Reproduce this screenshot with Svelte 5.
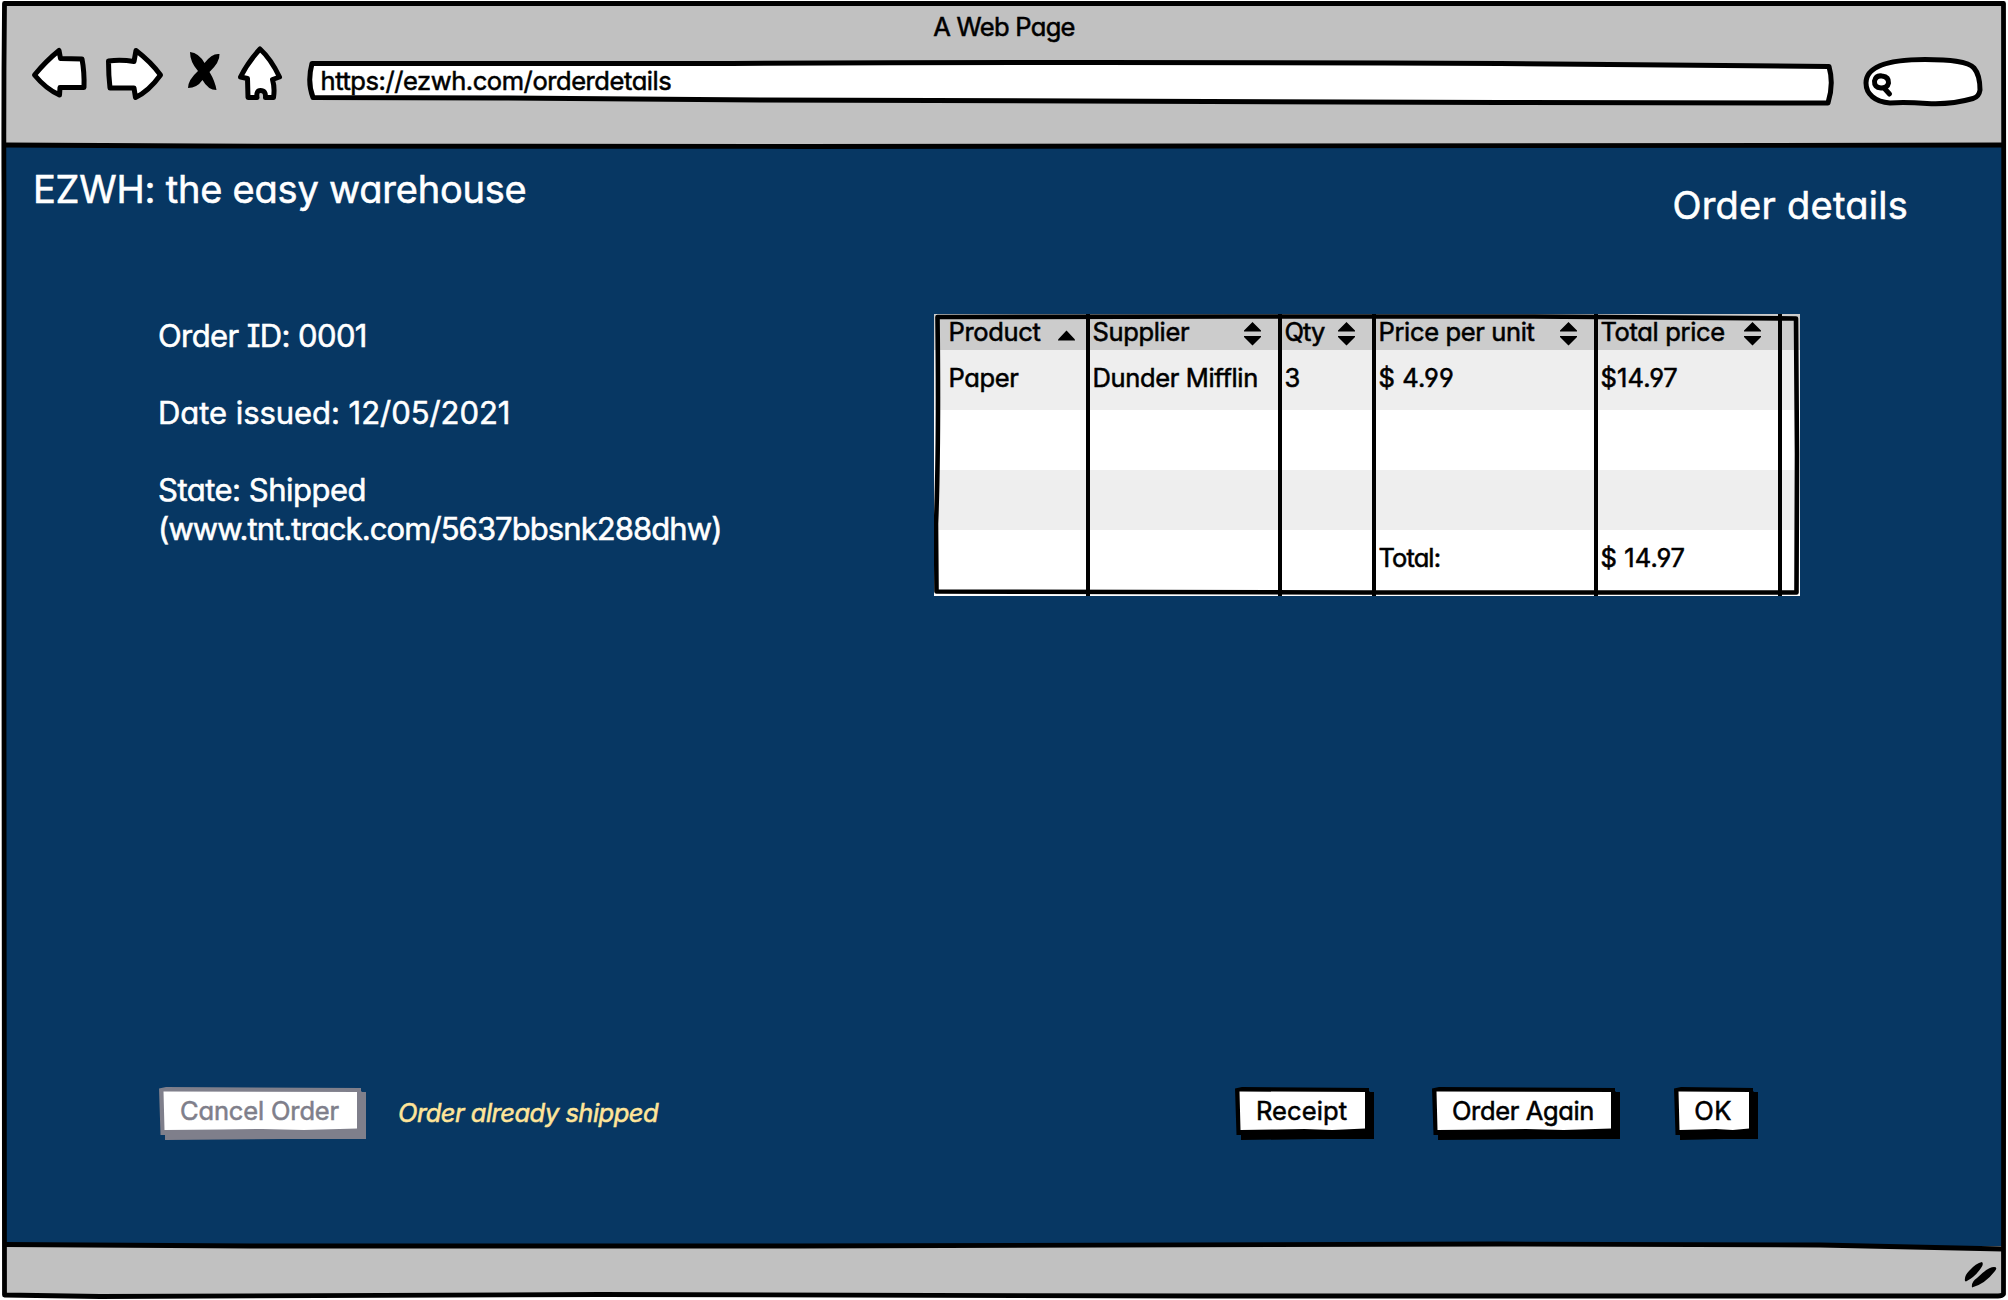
<script>
  const columns = [
    { label: 'Product', sort: 'up' },
    { label: 'Supplier', sort: 'both' },
    { label: 'Qty', sort: 'both', tight: true },
    { label: 'Price per unit', sort: 'both' },
    { label: 'Total price', sort: 'both' },
    { label: '', sort: '' }
  ];
  const rows = [
    ['Paper', 'Dunder Mifflin', '3', '$ 4.99', '$14.97', ''],
    ['', '', '', '', '', ''],
    ['', '', '', '', '', ''],
    ['', '', '', 'Total:', '$ 14.97', '']
  ];
</script>

<div class="window">
  <header>
    <div class="title">A Web Page</div>
    <div class="toolbar">
      <svg width="66" height="70" viewBox="30 42 66 70" class="ink">
        <path d="M34.500 75 Q46 61 59 50.500 L60.500 58.500 L82 59 Q84.500 72 84 87.500 L60 87.500 L59.500 95 Q46 89 34.500 75Z" />
      </svg>
      <svg width="80" height="70" viewBox="96 42 80 70" class="ink">
        <path d="M108.500 61 Q121 59.500 134 61.500 L136 50.500 Q151 62 160.500 75 Q149 91 135.500 97.500 L134 88 L110 88 Q108.500 75 108.500 61Z" />
      </svg>
      <svg width="52" height="70" viewBox="176 42 52 70">
        <path d="M190 52 Q199 53 204.500 63 Q212 53 219.500 54 Q220 62 209.500 72 Q215 81 216.500 90 Q208 90 202.500 80 Q197 88 188 88 Q188 80 198 71 Q190 62 190 52Z" />
      </svg>
      <svg width="68" height="70" viewBox="228 42 68 70" class="ink">
        <path d="M260 49 Q271 59 279.500 77 L272.500 79.500 Q275 88 273.500 97.500 L265.500 97.500 Q266 90.500 260.500 90.500 Q256 90.500 257 97.500 L248 97.500 L247.500 78.500 L240.500 77 Q248 62 260 49Z" />
      </svg>
      <div class="address">
        <svg width="1552" height="70" viewBox="296 42 1552 70" class="ink">
          <path d="M312 63.500 L700 63.500 Q1100 61.500 1500 63.500 L1829 66.500 Q1834 84 1828 103 L1500 102.500 Q1000 102 760 100 L500 98 L313 97.500 Q307 82 312 63.500Z" />
        </svg>
        <span>https://ezwh.com/orderdetails</span>
      </div>
      <svg width="142" height="70" viewBox="1848 42 142 70" class="ink">
        <path d="M1866 83 C1866 66 1889 59.500 1925 59.500 C1949 59.500 1968 61 1974 68 Q1980 75 1980 90 Q1979 97 1973 98.500 Q1950 105 1927 103.500 Q1905 102 1890 103 C1875 102 1866 94 1866 83Z" />
        <path class="lens" d="M1874.500 81 Q1876 75 1882 76 Q1889 77 1888.500 83 Q1887.500 88 1881 88 Q1874 87.500 1874.500 81Z M1884.500 88.500 L1889.500 94" />
      </svg>
    </div>
  </header>

  <main>
    <div class="headings">
      <h1>EZWH: the easy warehouse</h1>
      <h2>Order details</h2>
    </div>

    <div class="content">
      <div class="info">
        <p class="id">Order ID: 0001</p>
        <p>Date issued: 12/05/2021</p>
        <p class="state">State: Shipped<br /><span>(www.tnt.track.com/5637bbsnk288dhw)</span></p>
      </div>

      <div class="table">
        <div class="row head">
          {#each columns as col}
            <div class="cell" class:tight={col.tight}>
              <span>{col.label}</span>
              {#if col.sort}
                <svg width="17" height="24" viewBox="0 0 17 24">
                  {#if col.sort === 'up'}
                    <path d="M0 18.500 V17.500 L8.500 8.500 L17 17.500 V18.500Z" />
                  {:else}
                    <path d="M0 9.500 V8.500 L8.500 0 L17 8.500 V9.500Z M0 14 H17 V15 L8.500 23.500 L0 15Z" />
                  {/if}
                </svg>
              {/if}
            </div>
          {/each}
        </div>
        {#each rows as row}
          <div class="row">
            {#each row as value}
              <div class="cell" class:tight={value === 'Total:'} class:money={value.startsWith('$')}>{value}</div>
            {/each}
          </div>
        {/each}
        <svg class="outline" width="866" height="282" viewBox="0 0 866 282">
          <path d="M3.500 3 L300 2.500 L600 2.500 L862 4.500 L863 140 L862.500 278.500 L430 278.500 L2.500 277.500 L2 210 Q5 130 3.500 3Z" />
        </svg>
      </div>
    </div>

    <div class="actions">
      <button class="cancel" disabled><span>Cancel Order</span></button>
      <em>Order already shipped</em>
      <button class="receipt"><span>Receipt</span></button>
      <button class="again"><span>Order Again</span></button>
      <button class="ok"><span>OK</span></button>
    </div>
  </main>

  <footer>
    <svg width="36" height="30" viewBox="1963 1260 36 30">
      <path d="M1965 1281 Q1964 1276 1969 1271 Q1976 1263 1982 1262 Q1984 1264 1981 1268 Q1975 1277 1966 1281.500Z M1972 1287.500 Q1971 1282 1977 1278 Q1988 1267 1994 1267 Q1998 1267 1995 1271 Q1985 1284 1972 1287.500Z" />
    </svg>
  </footer>

  <svg class="frame" width="2008" height="1300" viewBox="0 0 2008 1300">
    <path d="M4.500 3.500 H2003.500 L2004 400 L2003.500 1294 Q2002 1296 1998 1296 L1200 1296 L600 1294.500 Q200 1296.500 100 1296.500 L4.500 1295 L4 700 L4 200 Q3.500 100 4.500 3.500Z" />
    <path d="M5 145 L200 146 L800 146.500 L1200 146 L2003 145" />
    <path d="M5 1244.500 L250 1246 L800 1246 L1500 1244 L1820 1245 L2003 1249" />
  </svg>
</div>

<style>
  :global(body) {
    background: #fff;
  }

  .window {
    position: relative;
    display: flex;
    flex-direction: column;
    width: 2008px;
    height: 1300px;
    padding: 4px;
    box-sizing: border-box;
    overflow: hidden;
    font-family: Inter, Lato, sans-serif;
    font-feature-settings: 'cv11', 'cv08', 'cv04';
    font-size: 25.5px;
    letter-spacing: -0.35px;
    color: #000;
    -webkit-text-stroke: 0.55px currentColor;
  }

  svg {
    display: block;
    flex: none;
  }

  .ink path {
    fill: #fff;
    stroke: #000;
    stroke-width: 5;
    stroke-linejoin: round;
    stroke-linecap: round;
  }

  .ink .lens {
    fill: none;
  }

  .frame {
    position: absolute;
    inset: 0;
    pointer-events: none;
    fill: none;
    stroke: #000;
    stroke-width: 4.8;
    stroke-linejoin: round;
  }

  header {
    height: 142px;
    box-sizing: border-box;
    padding-top: 7px;
    background: #c1c1c1;
  }

  .title {
    text-align: center;
    line-height: 31px;
    letter-spacing: -0.7px;
  }

  .toolbar {
    display: flex;
    padding-left: 26px;
  }

  .address {
    display: grid;
  }

  .address > * {
    grid-area: 1 / 1;
  }

  .address span {
    line-height: 48px;
    padding: 15px 0 0 24.500px;
    letter-spacing: -0.43px;
  }

  main {
    flex: 1;
    display: flex;
    flex-direction: column;
    background: #073763;
    color: #fff;
  }

  .headings {
    display: flex;
    justify-content: space-between;
    align-items: flex-start;
    height: 168px;
    box-sizing: border-box;
    padding: 19px 96px 0 29px;
  }

  h1,
  h2 {
    margin: 0;
    font-size: 38px;
    font-weight: 400;
    line-height: 48px;
    letter-spacing: -0.22px;
  }

  h2 {
    margin-top: 16px;
    letter-spacing: 0.25px;
  }

  .content {
    display: flex;
    justify-content: space-between;
    align-items: flex-start;
    padding: 0 204px 0 154px;
  }

  .info {
    padding-top: 3px;
    font-size: 31px;
    line-height: 38.5px;
    letter-spacing: -0.05px;
  }

  .info p {
    margin: 0 0 38.5px;
  }

  .info .id {
    letter-spacing: -0.6px;
  }

  .info .state {
    letter-spacing: -0.5px;
  }

  .state span {
    letter-spacing: -0.92px;
  }

  .table {
    position: relative;
    width: 866px;
    height: 282px;
    background: #fff;
    color: #000;
  }

  .row {
    display: grid;
    grid-template-columns: 152px 192px 94px 222px 184px 22px;
    height: 60px;
    line-height: 55.5px;
    background: #fff;
  }

  .row:nth-child(even) {
    background: #eee;
  }

  .row.head {
    height: 36px;
    line-height: 35px;
    background: #ccc;
  }

  .row:nth-child(5) {
    height: 66px;
  }

  .cell {
    display: flex;
    justify-content: space-between;
    border-left: 4px solid #000;
    padding: 0 17px 0 2.500px;
    white-space: nowrap;
    min-width: 0;
  }

  .cell:first-child {
    border-left: 0;
    padding: 0 11px 0 14.500px;
  }

  .cell:last-child {
    padding: 0;
  }

  .cell.tight {
    letter-spacing: -0.9px;
  }

  .cell.money {
    letter-spacing: 0.1px;
  }

  .cell svg {
    margin-top: 8px;
  }

  .outline {
    position: absolute;
    inset: 0;
    fill: none;
    stroke: #000;
    stroke-width: 4.6;
    stroke-linejoin: round;
  }

  .actions {
    display: flex;
    margin-top: auto;
    padding: 0 0 106px 155px;
  }

  button {
    --edge: #000;
    position: relative;
    height: 53px;
    border: 0;
    padding: 0 5px 5.500px 0;
    background: none;
    font: inherit;
    font-feature-settings: inherit;
    letter-spacing: -0.35px;
    line-height: 47.5px;
    color: #000;
    -webkit-text-stroke: inherit;
  }

  button::before,
  button::after {
    content: '';
    position: absolute;
    inset: 0;
    background: var(--edge);
    clip-path: polygon(0 1.500px, 7px 0, calc(100% - 5px) 1px, calc(100% - 5px) 4px, calc(100% - 4px) 5px, 100% 5px, 100% 52px, 60% 52px, 6px 53px, 6px 48px, 1.500px 48px);
  }

  button::after {
    background: #fff;
    clip-path: polygon(4.500px 4.500px, calc(100% - 9px) 5px, calc(100% - 9px) 41.500px, 70% 43px, 50% 42px, 30% 42.500px, 5.500px 43px);
  }

  button span {
    position: relative;
    z-index: 1;
    display: block;
    text-align: center;
    padding-right: 1px;
  }

  .cancel {
    --edge: #7f7f8b;
    width: 207px;
    color: #7f7f8b;
    letter-spacing: -0.15px;
  }

  em {
    margin: 2px auto 0 32px;
    line-height: 47.5px;
    letter-spacing: -0.5px;
    color: #ffe599;
  }

  .receipt {
    width: 139px;
    letter-spacing: 0.1px;
  }

  .again {
    width: 188px;
    margin-left: 58px;
  }

  .ok {
    width: 84px;
    margin: 0 246px 0 54px;
    letter-spacing: 0.4px;
  }

  footer {
    display: flex;
    justify-content: flex-end;
    height: 50px;
    box-sizing: border-box;
    padding: 14px 5px 0 0;
    background: #c1c1c1;
  }
</style>
